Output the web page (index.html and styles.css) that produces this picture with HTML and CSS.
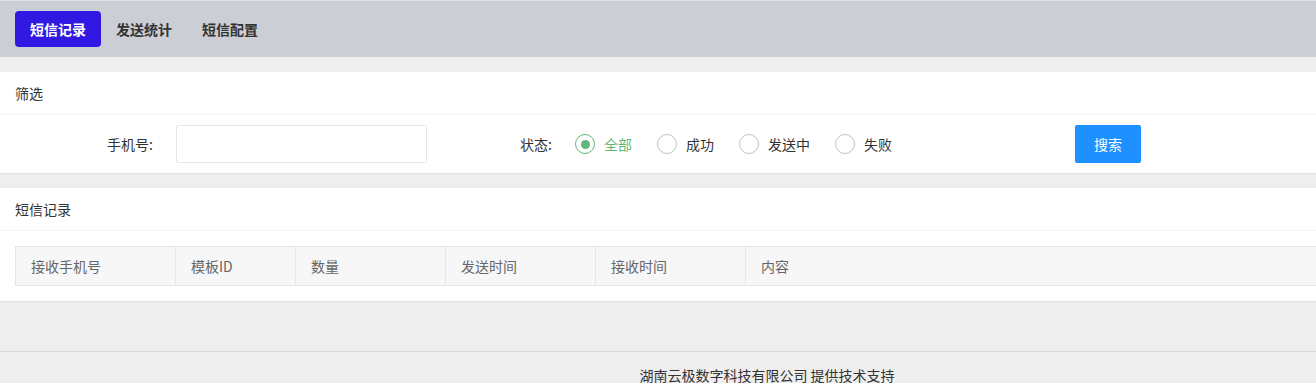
FILE: index.html
```html
<!DOCTYPE html>
<html lang="zh-CN">
<head>
<meta charset="UTF-8" />
<meta name="viewport" content="width=device-width, initial-scale=1" />
<title>短信记录</title>
<link rel="stylesheet" href="styles.css">
</head>
<body>
<div class="page">

  <div class="topbar">
    <a class="tab active">短信记录</a>
    <a class="tab">发送统计</a>
    <a class="tab">短信配置</a>
  </div>

  <div class="card">
    <div class="card-header">筛选</div>
    <div class="card-body filter">
      <label class="form-label phone-label">手机号:</label>
      <input class="input" type="text" />
      <label class="form-label status-label">状态:</label>
      <div class="radios">
        <span class="radio checked"><i class="dot"></i>全部</span>
        <span class="radio"><i class="dot"></i>成功</span>
        <span class="radio"><i class="dot"></i>发送中</span>
        <span class="radio"><i class="dot"></i>失败</span>
      </div>
      <button class="btn">搜索</button>
    </div>
  </div>

  <div class="card">
    <div class="card-header">短信记录</div>
    <div class="card-body records">
      <table class="table">
        <thead>
          <tr>
            <th class="c-phone">接收手机号</th>
            <th class="c-tpl">模板ID</th>
            <th class="c-num">数量</th>
            <th class="c-send">发送时间</th>
            <th class="c-recv">接收时间</th>
            <th>内容</th>
          </tr>
        </thead>
      </table>
    </div>
  </div>

  <div class="footer">湖南云极数字科技有限公司 提供技术支持</div>

</div>
</body>
</html>
```

FILE: styles.css
```css
html, body {
  margin: 0;
  padding: 0;
  overflow: hidden;
  background: #eeeeee;
}
body {
  font-family: "Noto Sans CJK SC", "Liberation Sans", sans-serif;
  font-size: 14px;
  color: #333;
}
.page {
  width: 1534px;
}
.topbar {
  display: flex;
  background: #cbced5;
  border-top: 1px solid #dfe0e4;
  padding: 10px 15px 10px;
}
.tab {
  display: block;
  height: 36px;
  line-height: 36px;
  padding: 0 15px;
  font-weight: 700;
  color: #333;
  border-radius: 4px;
  cursor: pointer;
}
.tab.active {
  background: #3118e3;
  color: #fff;
}
.card {
  background: #fff;
  border-radius: 2px;
  box-shadow: 0 1px 2px 0 rgba(0,0,0,0.06);
  margin-top: 15px;
}
.card-header {
  height: 42px;
  line-height: 42px;
  padding: 0 15px;
  border-bottom: 1px solid #f6f6f6;
  color: #333;
}
.card-body {
  padding: 10px 15px;
}
.filter {
  display: flex;
  align-items: center;
}
.form-label {
  text-align: right;
  color: #333;
}
.phone-label {
  width: 138px;
  margin-right: 23px;
}
.input {
  width: 251px;
  height: 38px;
  box-sizing: border-box;
  border: 1px solid #e6e6e6;
  border-radius: 2px;
  padding: 0 10px;
  outline: none;
}
.status-label {
  width: 125px;
  margin-right: 23px;
}
.radios {
  display: flex;
  align-items: center;
}
.radio {
  display: flex;
  align-items: center;
  margin-right: 25px;
  color: #333;
  cursor: pointer;
}
.radio .dot {
  width: 20px;
  height: 20px;
  box-sizing: border-box;
  border: 1.5px solid #c2c2c2;
  border-radius: 50%;
  margin-right: 9px;
  display: flex;
  align-items: center;
  justify-content: center;
}
.radio.checked {
  color: #5fb878;
}
.radio.checked .dot {
  border-color: #5fb878;
}
.radio.checked .dot::after {
  content: "";
  width: 9px;
  height: 9px;
  border-radius: 50%;
  background: #5fb878;
}
.btn {
  margin-left: 158px;
  height: 38px;
  width: 66px;
  border: none;
  border-radius: 2px;
  background: #1e90ff;
  color: #fff;
  font-family: inherit;
  font-size: 14px;
  cursor: pointer;
}
.records {
  padding: 15px;
}
.table {
  width: 100%;
  border-collapse: collapse;
}
.table th {
  height: 38px;
  padding: 0 15px;
  text-align: left;
  font-weight: 400;
  color: #666;
  background: #f7f7f7;
  border: 1px solid #e6e6e6;
}
.c-phone { width: 129px; }
.c-tpl { width: 89px; }
.c-num { width: 119px; }
.c-send { width: 119px; }
.c-recv { width: 119px; }
.footer {
  margin-top: 50px;
  border-top: 1px solid #d9d9d9;
  padding-top: 13px;
  text-align: center;
  color: #333;
}
```
